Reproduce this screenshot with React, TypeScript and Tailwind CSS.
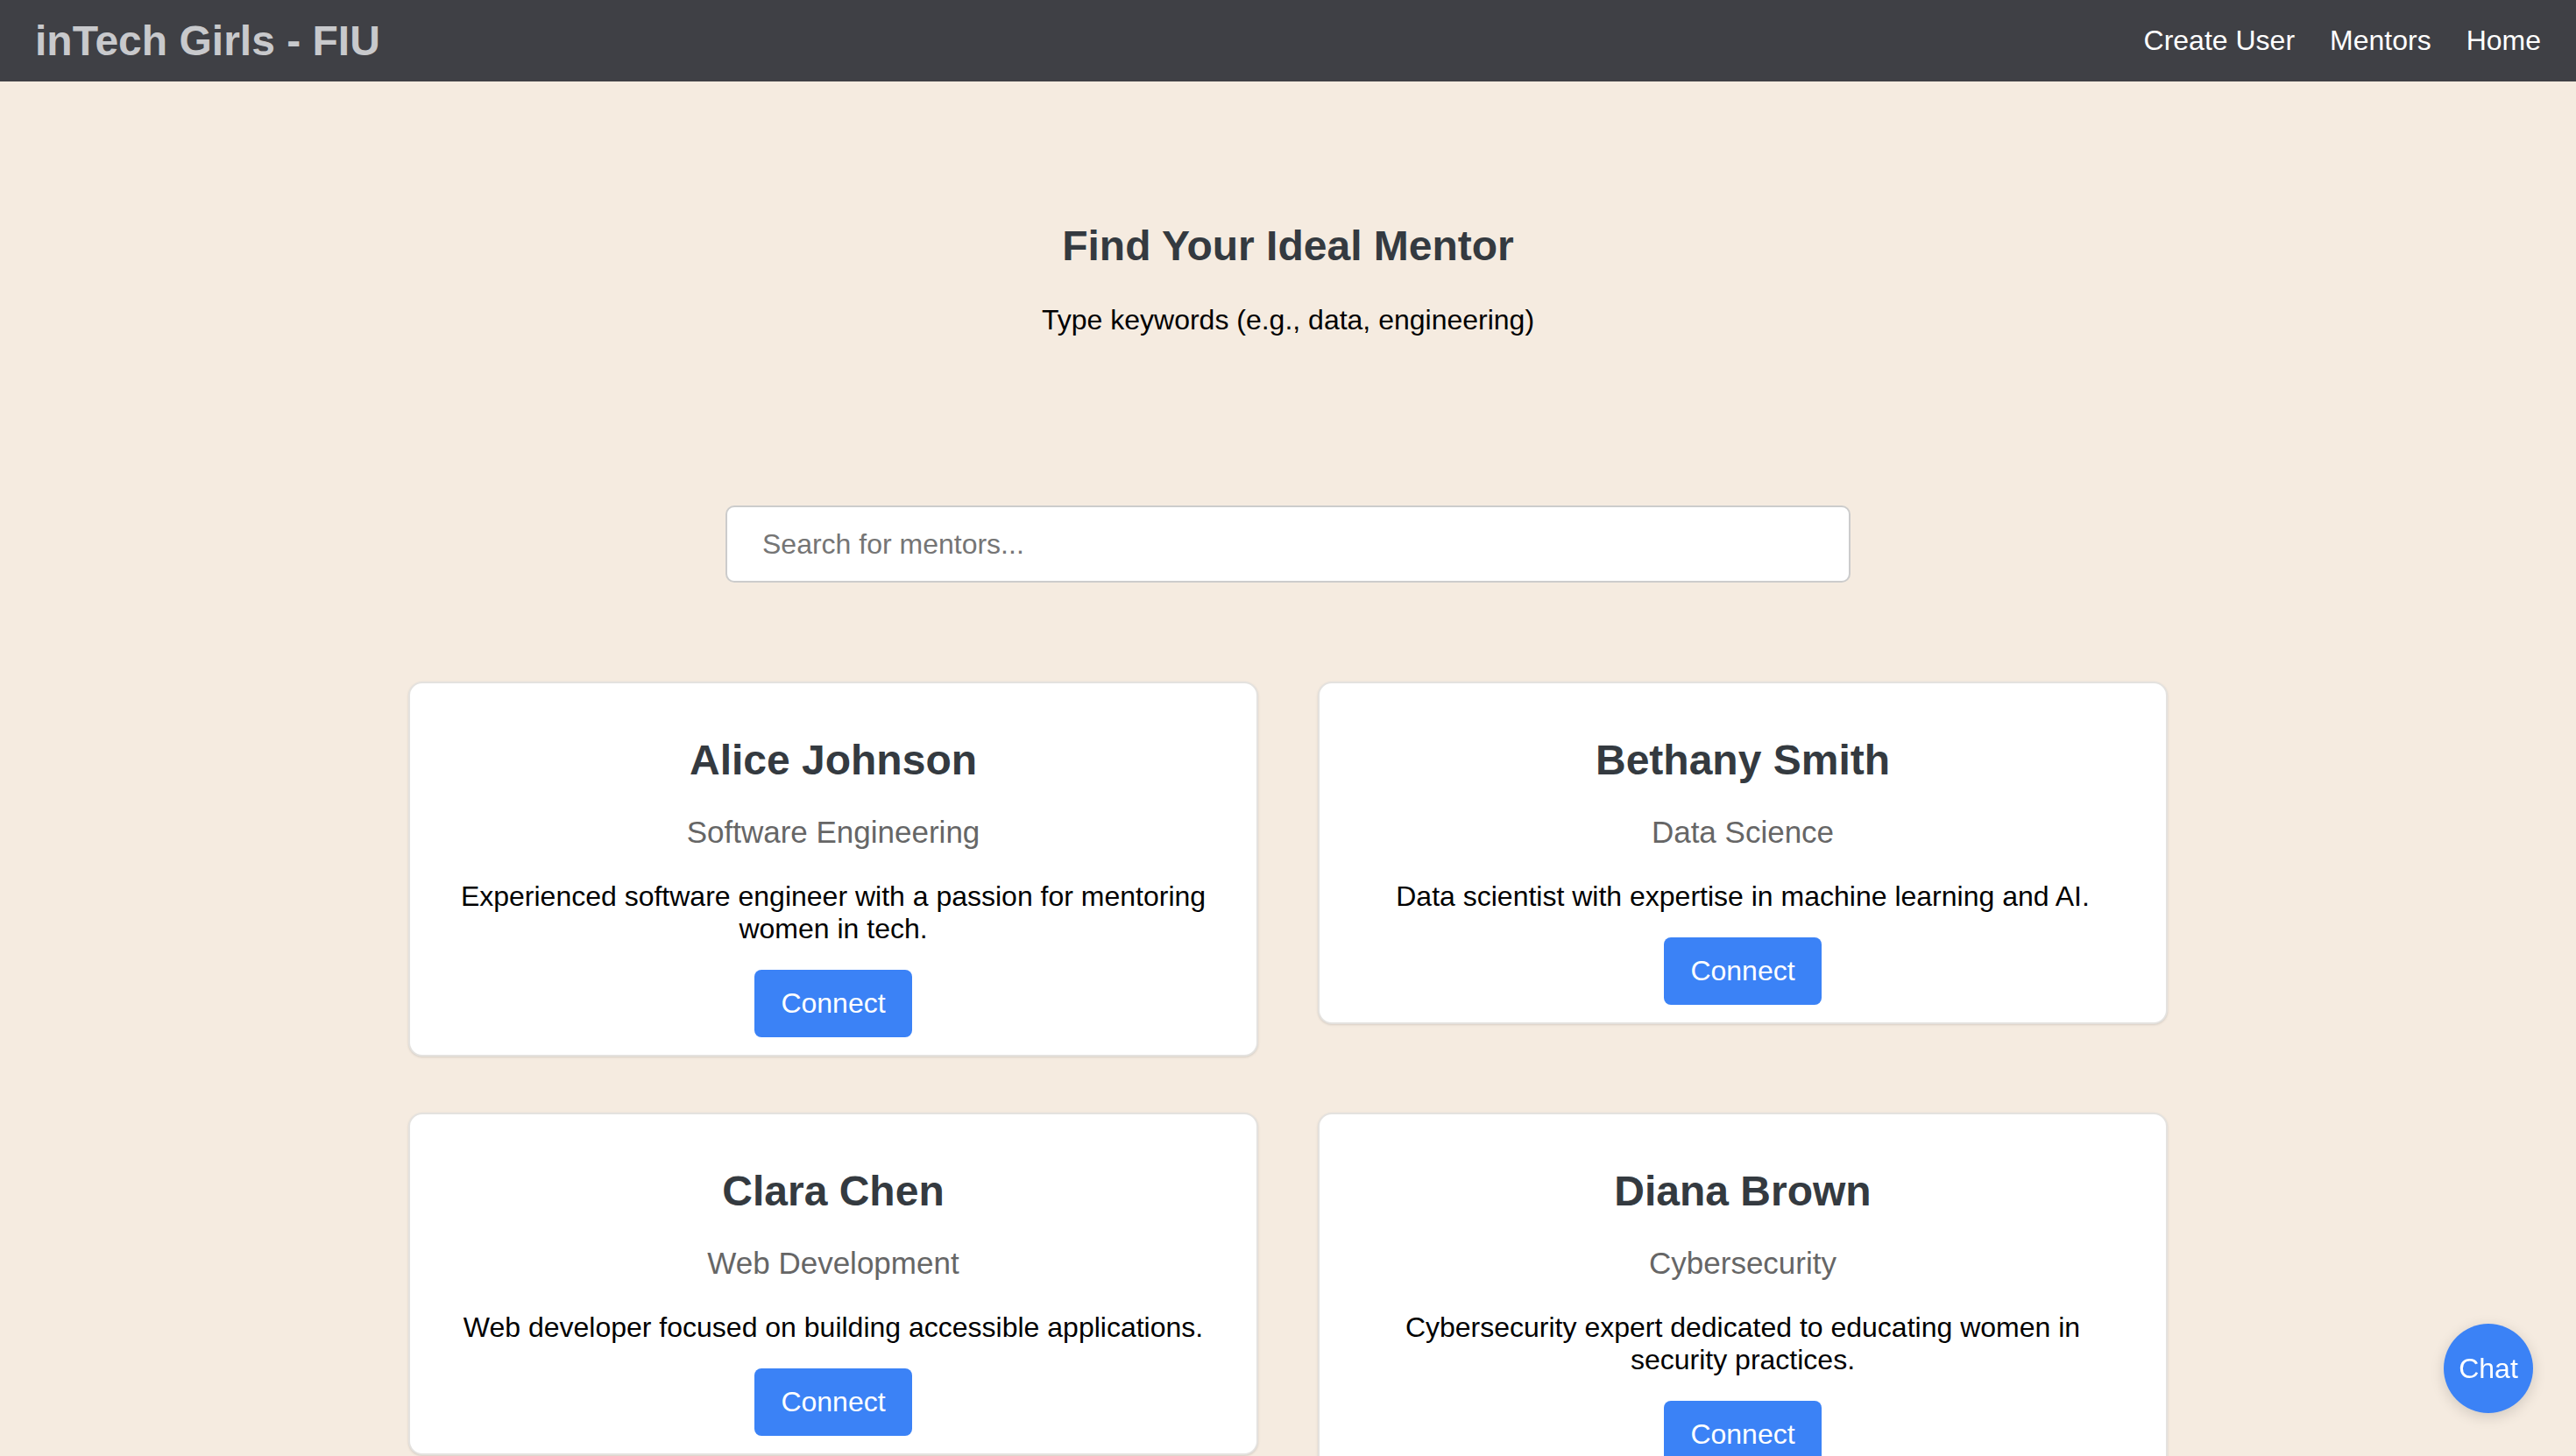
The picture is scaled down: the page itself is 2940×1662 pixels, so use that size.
import React from "react";

type Mentor = {
  name: string;
  field: string;
  bio: string;
};

const MENTORS: Mentor[] = [
  {
    name: "Alice Johnson",
    field: "Software Engineering",
    bio: "Experienced software engineer with a passion for mentoring women in tech.",
  },
  {
    name: "Bethany Smith",
    field: "Data Science",
    bio: "Data scientist with expertise in machine learning and AI.",
  },
  {
    name: "Clara Chen",
    field: "Web Development",
    bio: "Web developer focused on building accessible applications.",
  },
  {
    name: "Diana Brown",
    field: "Cybersecurity",
    bio: "Cybersecurity expert dedicated to educating women in security practices.",
  },
];

function NavBar() {
  return (
    <header className="h-[93px] bg-[#3f4045] flex items-center justify-between px-[40px]">
      <span className="text-[48px] leading-[55px] font-bold text-[#c8c9cc]">
        inTech Girls - FIU
      </span>
      <nav className="flex items-center gap-[40px] text-[32px] leading-[37px] text-white">
        <a href="#">Create User</a>
        <a href="#">Mentors</a>
        <a href="#">Home</a>
      </nav>
    </header>
  );
}

function MentorCard({ mentor }: { mentor: Mentor }) {
  return (
    <div className="bg-white border-2 border-[#e4e2df] rounded-[16px] shadow-sm pt-[60px] pb-[20px] px-[45px] flex flex-col items-center text-center">
      <h2 className="text-[48px] leading-[55px] font-bold text-[#343a40]">
        {mentor.name}
      </h2>
      <p className="mt-[35px] text-[35px] leading-[40px] text-[#666666]">
        {mentor.field}
      </p>
      <p className="mt-[35px] text-[32px] leading-[37px] text-black">{mentor.bio}</p>
      <button className="mt-[28px] bg-[#3b82f6] text-white text-[32px] leading-[37px] px-[30px] py-[20px] rounded-[8px]">
        Connect
      </button>
    </div>
  );
}

export default function App() {
  return (
    <div
      className="min-h-screen bg-[#f5ebe0]"
      style={{ fontFamily: '"Liberation Sans", Arial, Helvetica, sans-serif' }}
    >
      <NavBar />

      <main className="flex flex-col items-center pt-[160px] pb-[80px]">
        <h1 className="text-[48px] leading-[55px] font-bold text-[#343a40]">
          Find Your Ideal Mentor
        </h1>
        <p className="mt-[39px] text-[32px] leading-[37px] text-black">
          Type keywords (e.g., data, engineering)
        </p>

        <input
          type="text"
          placeholder="Search for mentors..."
          className="mt-[193px] w-[1284px] h-[88px] bg-white border-2 border-[#cccccc] rounded-[10px] px-[40px] text-[32px] text-black placeholder:text-[#757575] outline-none"
        />

        <div className="mt-[113px] w-[2008px] grid grid-cols-2 gap-x-[68px] gap-y-[64px] items-start">
          {MENTORS.map((m) => (
            <MentorCard key={m.name} mentor={m} />
          ))}
        </div>
      </main>

      {/* floating chat bubble */}
      <button className="fixed right-[49px] bottom-[49px] w-[102px] h-[102px] rounded-full bg-[#3b82f6] text-white text-[32px] shadow-[0_4px_16px_rgba(0,0,0,0.15)]">
        Chat
      </button>
    </div>
  );
}
